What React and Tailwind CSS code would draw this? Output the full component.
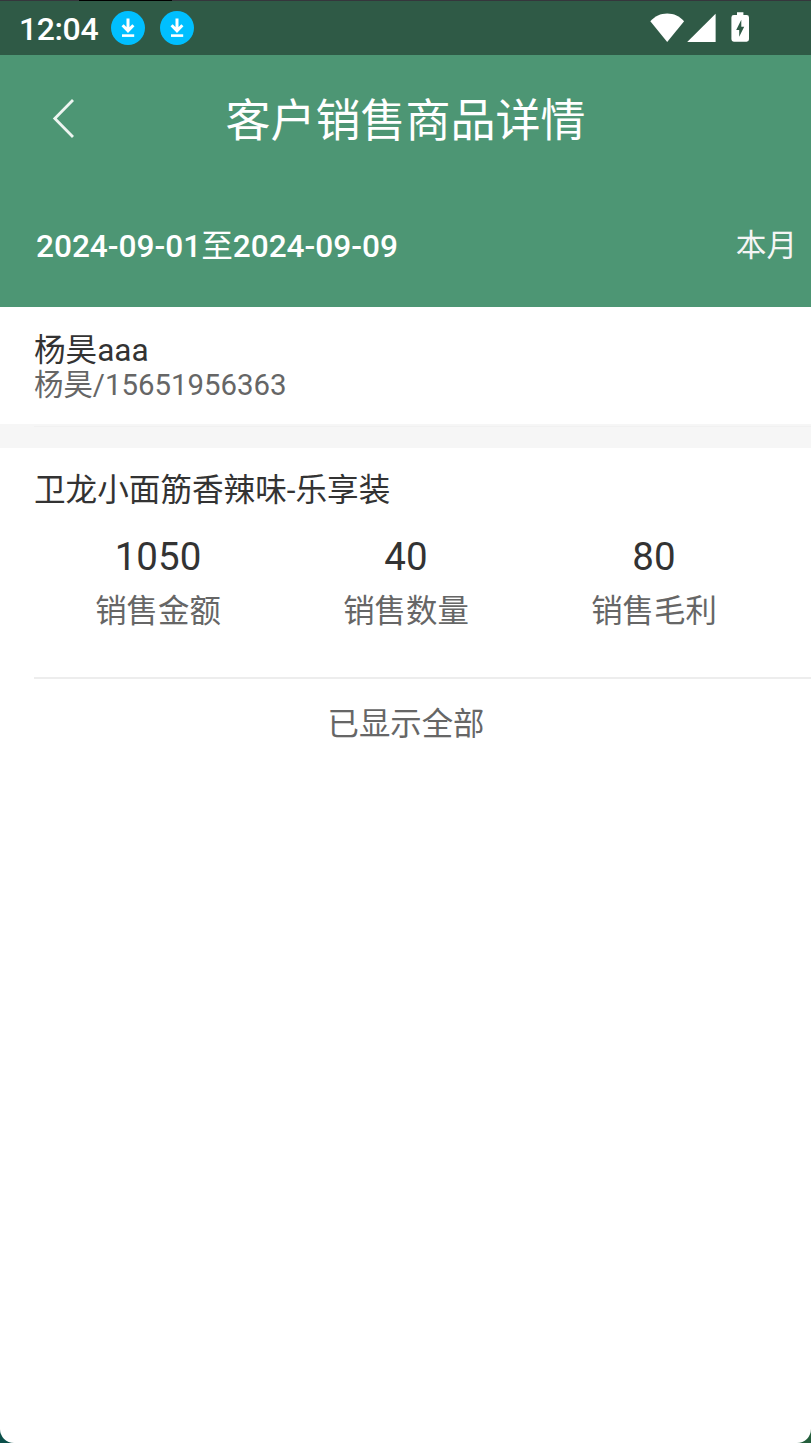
import React from 'react'

const stats = [
  { label: '销售金额', value: '1050' },
  { label: '销售数量', value: '40' },
  { label: '销售毛利', value: '80' },
]

const DownloadBadge = () => (
  <svg width="34" height="34" viewBox="0 0 34 34" fill="none">
    <circle cx="17" cy="17" r="17" fill="#00bfff" />
    <path d="M17 7.5V19.5M11.6 14.2l5.4 5.6 5.4-5.6" stroke="#fff" strokeWidth="3" />
    <path d="M11 24.6h12.2" stroke="#fff" strokeWidth="2.6" />
  </svg>
)

const StatusBar = () => (
  <div className="flex h-[55px] shrink-0 flex-col bg-[#2f5a46] text-white">
    <div className="flex h-px bg-[#35363c] pl-[79px]">
      <div className="w-[93px] bg-black" />
    </div>
    <div className="flex h-[54px] items-center pr-[61px] pl-[19px]">
      <span className="w-[92px] pt-0.5 text-[32px] leading-[54px] font-medium tracking-[-0.4px]">12:04</span>
      <div className="flex gap-[15px]">
        <DownloadBadge />
        <DownloadBadge />
      </div>
      <svg className="ml-auto" width="101" height="54" viewBox="649 1 101 54" fill="#fff">
        <path d="M650.3 21.2C654.8 16.2 660.6 13.5 667.2 13.5S679.6 16.2 684.1 21.2L667.2 41.9z" />
        <path d="M715.6 13.8V42h-28.4z" />
        <path
          fillRule="evenodd"
          d="M737 12.2h6.4v2.9h3.2a2.4 2.4 0 0 1 2.4 2.4v21.8a2.4 2.4 0 0 1-2.4 2.4h-12.8a2.4 2.4 0 0 1-2.4-2.4V17.5a2.4 2.4 0 0 1 2.4-2.4h3.2zM741.3 19.8L736.2 29.9h3V36.8L744.2 26.7h-2.9z"
        />
      </svg>
    </div>
  </div>
)

const App = () => {
  return (
    <div className="h-[1443px] w-[811px] overflow-hidden bg-linear-to-r from-[#0b4f4a] to-[#245f3c] font-['Roboto','Noto_Sans_CJK_SC',sans-serif]">
      <div className="flex h-full flex-col overflow-hidden rounded-b-[14px] bg-white">
        <StatusBar />

        <header className="h-[252px] shrink-0 bg-[#4d9674] text-white">
          <div className="grid h-[127px] grid-cols-[1fr_auto_1fr] items-center">
            <svg className="ml-[51px]" width="26" height="42" viewBox="0 0 26 42" fill="none">
              <path d="M22 2L3.8 20.5 22 39" stroke="#eef5f1" strokeWidth="2.8" />
            </svg>
            <h1 className="pt-[7px] text-[45px] leading-[60px]">客户销售商品详情</h1>
          </div>
          <div className="flex h-[125px] items-start justify-between pt-[43px] pr-[14px] pl-9">
            <span className="text-[31.6px] leading-[44px] font-medium">
              2024-09-01<span className="font-normal">至</span>2024-09-09
            </span>
            <span className="text-[30.6px] leading-[42px] text-[#f5f5f5]">本月</span>
          </div>
        </header>

        <section className="h-[117px] shrink-0 pt-[26px] pl-[34px]">
          <p className="text-[31.6px] leading-[36px] text-[#333]">杨昊aaa</p>
          <p className="text-[29.4px] leading-[33px] text-[#666]">杨昊/15651956363</p>
        </section>

        <div className="h-6 shrink-0 bg-[#f6f6f6] pt-0.5 pl-[34px]">
          <div className="h-px bg-[#f1f1f1]" />
        </div>

        <section className="ml-[34px] h-[231px] shrink-0 border-b-2 border-[#ededed] pt-[22px]">
          <h2 className="text-[31.6px] leading-[42px] text-[#333]">卫龙小面筋香辣味-乐享装</h2>
          <div className="mr-[33px] grid grid-cols-3 pt-5 text-center">
            {stats.map((s) => (
              <div key={s.label}>
                <p className="text-[38.5px] leading-[50px] text-[#333]">{s.value}</p>
                <p className="pt-0.5 text-[31.4px] leading-[56px] text-[#666]">{s.label}</p>
              </div>
            ))}
          </div>
        </section>

        <p className="pt-6 pl-px text-center text-[31.4px] leading-[44px] text-[#666]">已显示全部</p>
      </div>
    </div>
  )
}

export default App
